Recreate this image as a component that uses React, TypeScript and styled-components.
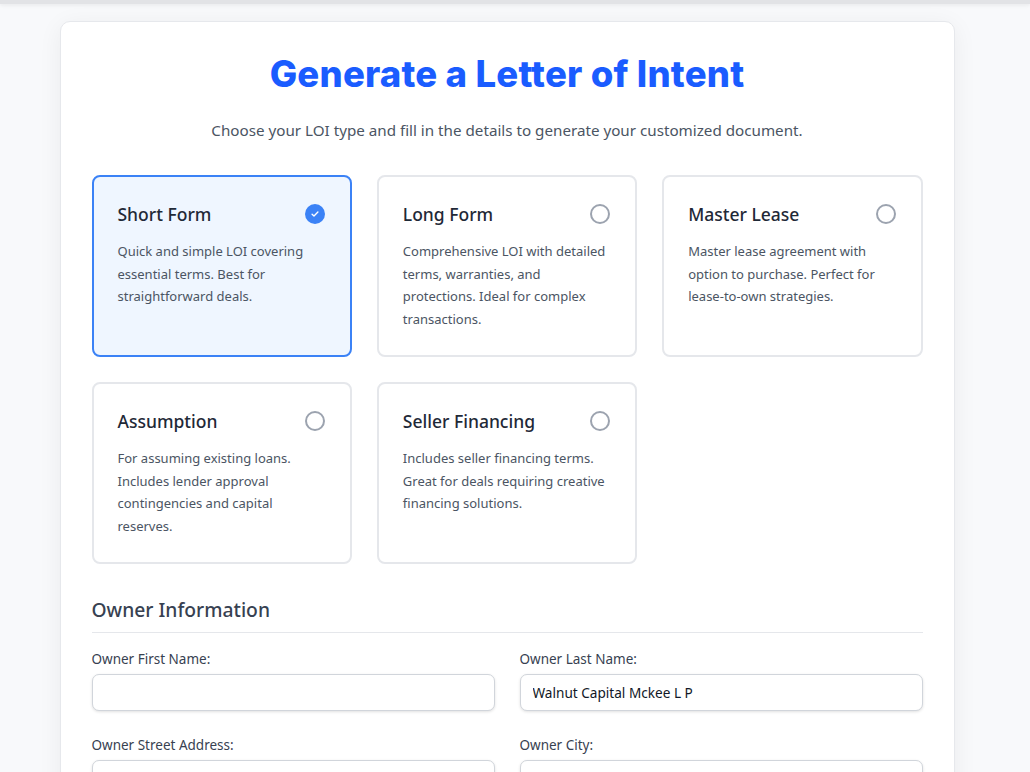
import React, { useState } from "react";
import styled, { createGlobalStyle } from "styled-components";

const GlobalStyle = createGlobalStyle`
  html, body {
    margin: 0;
    padding: 0;
    height: 100%;
    overflow: hidden;
    background: #f8f9fb;
    font-family: "Noto Sans", "Open Sans", sans-serif;
  }
  * {
    box-sizing: border-box;
  }
`;

const TopBar = styled.div`
  height: 4px;
  background: #e2e3e6;
  box-shadow: 0 1px 4px rgba(0, 0, 0, 0.08);
`;

const Page = styled.div`
  padding: 17px 16px 0 0;
`;

const Panel = styled.div`
  width: 895px;
  margin: 0 auto;
  background: #ffffff;
  border: 1px solid #e6e8ec;
  border-radius: 10px;
  box-shadow: 0 4px 24px rgba(15, 23, 42, 0.06);
  padding: 31px 31px 40px;
`;

const Title = styled.h1`
  margin: 0;
  text-align: center;
  font-family: Inter, "Liberation Sans", sans-serif;
  font-weight: 800;
  font-size: 36.5px;
  line-height: 42px;
  letter-spacing: 0.2px;
  color: #1a5cff;
`;

const Subtitle = styled.p`
  margin: 23px 0 0;
  text-align: center;
  font-size: 15.2px;
  line-height: 24px;
  color: #4b5563;
`;

const OptionGrid = styled.div`
  margin-top: 33px;
  display: grid;
  grid-template-columns: repeat(3, 1fr);
  gap: 25px;
`;

const OptionCard = styled.div<{ $selected: boolean }>`
  border: 2px solid ${(p) => (p.$selected ? "#3b82f6" : "#e5e7eb")};
  background: ${(p) => (p.$selected ? "#eff6ff" : "#ffffff")};
  border-radius: 8px;
  padding: 24px;
  min-height: 182px;
  cursor: pointer;
`;

const OptionHead = styled.div`
  display: flex;
  align-items: center;
  justify-content: space-between;
  height: 26px;
`;

const OptionTitle = styled.h3`
  margin: 0;
  font-size: 17.5px;
  font-weight: 500;
  color: #1f2937;
`;

const Radio = styled.span<{ $checked: boolean }>`
  width: 20px;
  height: 20px;
  border-radius: 50%;
  margin-right: 1px;
  display: flex;
  align-items: center;
  justify-content: center;
  border: ${(p) => (p.$checked ? "none" : "2px solid #9ca3af")};
  background: ${(p) => (p.$checked ? "#3b82f6" : "transparent")};
`;

const OptionText = styled.p`
  margin: 13px 0 0;
  font-size: 13px;
  line-height: 22.5px;
  color: #4b5563;
`;

const SectionTitle = styled.h2`
  margin: 32px 0 0;
  padding-bottom: 8px;
  border-bottom: 1px solid #e5e7eb;
  font-size: 19.3px;
  line-height: 28px;
  font-weight: 500;
  color: #374151;
`;

const FieldGrid = styled.div`
  margin-top: 16px;
  display: grid;
  grid-template-columns: 1fr 1fr;
  column-gap: 25px;
  row-gap: 24px;
`;

const Field = styled.label`
  display: flex;
  flex-direction: column;
  gap: 5px;
`;

const FieldLabel = styled.span`
  font-size: 13.5px;
  line-height: 20px;
  color: #374151;
`;

const TextInput = styled.input`
  height: 37px;
  border: 1px solid #d1d5db;
  border-radius: 7px;
  padding: 0 12px;
  font-family: "Noto Sans", sans-serif;
  font-size: 13.6px;
  color: #111827;
  background: #fff;
  box-shadow: 0 1px 3px rgba(0, 0, 0, 0.12);
  outline: none;
`;

const options = [
  {
    id: "short",
    title: "Short Form",
    text: "Quick and simple LOI covering essential terms. Best for straightforward deals.",
  },
  {
    id: "long",
    title: "Long Form",
    text: "Comprehensive LOI with detailed terms, warranties, and protections. Ideal for complex transactions.",
  },
  {
    id: "master",
    title: "Master Lease",
    text: "Master lease agreement with option to purchase. Perfect for lease-to-own strategies.",
  },
  {
    id: "assumption",
    title: "Assumption",
    text: "For assuming existing loans. Includes lender approval contingencies and capital reserves.",
  },
  {
    id: "seller",
    title: "Seller Financing",
    text: "Includes seller financing terms. Great for deals requiring creative financing solutions.",
  },
];

const fields = [
  { label: "Owner First Name:", value: "" },
  { label: "Owner Last Name:", value: "Walnut Capital Mckee L P" },
  { label: "Owner Street Address:", value: "" },
  { label: "Owner City:", value: "" },
];

const CheckIcon = () => (
  <svg width="10" height="10" viewBox="0 0 12 12" fill="none">
    <path d="M2.5 6.2l2.3 2.3 4.7-4.9" stroke="#fff" strokeWidth="1.6" strokeLinecap="round" strokeLinejoin="round" />
  </svg>
);

const App: React.FC = () => {
  const [selected, setSelected] = useState("short");
  const [values, setValues] = useState(fields.map((f) => f.value));

  return (
    <>
      <GlobalStyle />
      <TopBar />
      <Page>
        <Panel>
          <Title>Generate a Letter of Intent</Title>
          <Subtitle>Choose your LOI type and fill in the details to generate your customized document.</Subtitle>

          <OptionGrid>
            {options.map((o) => (
              <OptionCard key={o.id} $selected={selected === o.id} onClick={() => setSelected(o.id)}>
                <OptionHead>
                  <OptionTitle>{o.title}</OptionTitle>
                  <Radio $checked={selected === o.id}>{selected === o.id && <CheckIcon />}</Radio>
                </OptionHead>
                <OptionText>{o.text}</OptionText>
              </OptionCard>
            ))}
          </OptionGrid>

          <SectionTitle>Owner Information</SectionTitle>
          <FieldGrid>
            {fields.map((f, i) => (
              <Field key={f.label}>
                <FieldLabel>{f.label}</FieldLabel>
                <TextInput
                  value={values[i]}
                  onChange={(e) => {
                    const next = [...values];
                    next[i] = e.target.value;
                    setValues(next);
                  }}
                />
              </Field>
            ))}
          </FieldGrid>
        </Panel>
      </Page>
    </>
  );
};

export default App;
